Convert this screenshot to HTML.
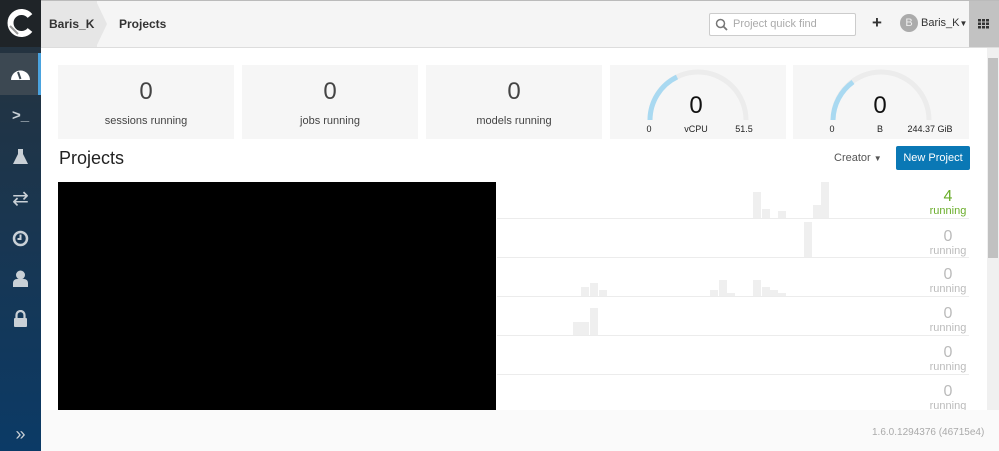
<!DOCTYPE html><html><head><style>
*{margin:0;padding:0;box-sizing:border-box}
body{width:999px;height:451px;overflow:hidden;font-family:"Liberation Sans",sans-serif;background:#fff;position:relative}
.a{position:absolute}
.side{left:0;top:0;width:41px;height:451px;background:linear-gradient(#27323b,#0b3a66)}
.card{background:#f6f6f6;top:65px;height:74px;text-align:center;color:#444}
.card .n{font-size:24px;font-weight:300;margin-top:13px;color:#444}
.card .l{font-size:11px;margin-top:9px;color:#444}
.bar{background:#efefef;width:8px}
.sep{left:497px;width:472px;height:1px;background:#ececec}
.run{left:913px;width:70px;text-align:center;color:#bbb}
.run b{display:block;font-weight:normal;font-size:16px;line-height:16px}
.run i{display:block;font-style:normal;font-size:11px;line-height:12px}
.ic{left:0;width:41px;text-align:center;color:#c9d0d6}
</style></head><body>
<div class="a side"></div>
<div class="a" style="left:0;top:0;width:41px;height:47px;background:#1f2428"></div>
<svg class="a" style="left:6px;top:8px" width="28" height="30" viewBox="0 0 28 30"><path d="M24 8 A11 11 0 1 0 24 22" fill="none" stroke="#fff" stroke-width="6"/><path d="M4 18 L12 26" stroke="#999" stroke-width="2"/></svg>
<div class="a" style="left:0;top:53px;width:41px;height:42px;background:#3c4852"></div>
<div class="a" style="left:38px;top:53px;width:3px;height:42px;background:#4aa3df"></div>
<svg class="a" style="left:10px;top:66px" width="21" height="15" viewBox="0 0 21 15"><path d="M1 14 A9.5 9.5 0 1 1 20 14 Z" fill="#fff"/><path d="M10.5 13 L8 6" stroke="#3c4852" stroke-width="2"/></svg>
<div class="a ic" style="top:107px;font-size:15px;font-weight:bold">&gt;_</div>
<svg class="a" style="left:13px;top:148px" width="15" height="17"><path d="M5 1h5v5l5 10H0L5 6z" fill="#c9d0d6"/></svg>
<div class="a ic" style="top:186px;font-size:20px">⇄</div>
<svg class="a" style="left:12px;top:230px" width="17" height="17"><circle cx="8.5" cy="8.5" r="6.5" fill="none" stroke="#c9d0d6" stroke-width="2.5"/><path d="M8.5 4.5v4.5h-3" stroke="#c9d0d6" stroke-width="2" fill="none"/></svg>
<svg class="a" style="left:13px;top:270px" width="15" height="17"><circle cx="7.5" cy="5" r="4.5" fill="#c9d0d6"/><path d="M0 17v-4a4 4 0 0 1 4-4h7a4 4 0 0 1 4 4v4z" fill="#c9d0d6"/></svg>
<svg class="a" style="left:13px;top:310px" width="15" height="17"><path d="M3.5 8V5a4 4 0 0 1 8 0v3" fill="none" stroke="#c9d0d6" stroke-width="2.2"/><rect x="1" y="8" width="13" height="9" rx="1" fill="#c9d0d6"/></svg>
<div class="a ic" style="top:424px;font-size:18px">»</div>
<div class="a" style="left:41px;top:0;width:958px;height:48px;background:#f5f5f5;border-top:1px solid #bbb;border-bottom:1px solid #ddd"></div>
<div class="a" style="left:41px;top:1px;width:56px;height:46px;background:#e6e6e6"></div>
<svg class="a" style="left:96px;top:1px" width="12" height="46"><path d="M0 0L11 23L0 46Z" fill="#e6e6e6"/></svg>
<div class="a" style="left:49px;top:17px;font-size:12px;font-weight:bold;color:#333">Baris_K</div>
<div class="a" style="left:119px;top:17px;font-size:12px;font-weight:bold;color:#333">Projects</div>
<div class="a" style="left:709px;top:13px;width:147px;height:23px;background:#fff;border:1px solid #ccc;border-radius:2px"></div>
<svg class="a" style="left:715px;top:18px" width="13" height="13"><circle cx="5.5" cy="5.5" r="4" fill="none" stroke="#777" stroke-width="1.5"/><path d="M8.5 8.5L12 12" stroke="#777" stroke-width="1.8"/></svg>
<div class="a" style="left:733px;top:18px;font-size:11px;color:#aaa">Project quick find</div>
<div class="a" style="left:872px;top:13px;font-size:17px;font-weight:bold;color:#333">+</div>
<div class="a" style="left:900px;top:14px;width:18px;height:18px;border-radius:50%;background:#ababab;color:#eee;font-size:11px;text-align:center;line-height:18px">B</div>
<div class="a" style="left:921px;top:17px;font-size:11px;color:#333">Baris_K<span style="font-size:8px">▼</span></div>
<div class="a" style="left:969px;top:1px;width:30px;height:46px;background:#c2c2c2"></div>
<svg class="a" style="left:978px;top:19px" width="11" height="10"><g fill="#333"><rect x="0" y="0" width="3" height="2.5"/><rect x="4" y="0" width="3" height="2.5"/><rect x="8" y="0" width="3" height="2.5"/><rect x="0" y="3.5" width="3" height="2.5"/><rect x="4" y="3.5" width="3" height="2.5"/><rect x="8" y="3.5" width="3" height="2.5"/><rect x="0" y="7" width="3" height="2.5"/><rect x="4" y="7" width="3" height="2.5"/><rect x="8" y="7" width="3" height="2.5"/></g></svg>
<div class="a" style="left:987px;top:48px;width:12px;height:362px;background:#f0f0f0"></div>
<div class="a" style="left:988px;top:58px;width:10px;height:200px;background:#c1c1c1"></div>
<div class="a card" style="left:58px;width:176px"><div class="n">0</div><div class="l">sessions running</div></div>
<div class="a card" style="left:242px;width:176px"><div class="n">0</div><div class="l">jobs running</div></div>
<div class="a card" style="left:426px;width:176px"><div class="n">0</div><div class="l">models running</div></div>
<div class="a card" style="left:610px;width:176px"></div>
<div class="a card" style="left:793px;width:176px"></div>
<svg class="a" style="left:610px;top:65px" width="176" height="74"><path d="M40 55A48 48 0 0 1 136 55" fill="none" stroke="#ececec" stroke-width="5"/><path d="M40 55A48 48 0 0 1 67 12" fill="none" stroke="#a9d9f1" stroke-width="5"/><text x="86" y="48" font-size="24" text-anchor="middle" fill="#111" font-family="Liberation Sans">0</text><text x="39" y="67" font-size="9" text-anchor="middle" fill="#222" font-family="Liberation Sans">0</text><text x="86" y="67" font-size="9" text-anchor="middle" fill="#222" font-family="Liberation Sans">vCPU</text><text x="134" y="67" font-size="9" text-anchor="middle" fill="#222" font-family="Liberation Sans">51.5</text></svg>
<svg class="a" style="left:793px;top:65px" width="176" height="74"><path d="M40 55A48 48 0 0 1 136 55" fill="none" stroke="#ececec" stroke-width="5"/><path d="M40 55A48 48 0 0 1 60 17" fill="none" stroke="#a9d9f1" stroke-width="5"/><text x="87" y="48" font-size="24" text-anchor="middle" fill="#111" font-family="Liberation Sans">0</text><text x="39" y="67" font-size="9" text-anchor="middle" fill="#222" font-family="Liberation Sans">0</text><text x="87" y="67" font-size="9" text-anchor="middle" fill="#222" font-family="Liberation Sans">B</text><text x="137" y="67" font-size="9" text-anchor="middle" fill="#222" font-family="Liberation Sans">244.37 GiB</text></svg>
<div class="a" style="left:59px;top:148px;font-size:18px;color:#222">Projects</div>
<div class="a" style="left:834px;top:152px;font-size:11px;color:#555">Creator <span style="font-size:8px">▼</span></div>
<div class="a" style="left:896px;top:146px;width:74px;height:24px;background:#0a78b5;border-radius:2px;color:#fff;font-size:11px;text-align:center;line-height:24px">New Project</div>
<div class="a sep" style="top:218px"></div><div class="a sep" style="top:257px"></div><div class="a sep" style="top:296px"></div><div class="a sep" style="top:335px"></div><div class="a sep" style="top:374px"></div>
<div class="a bar" style="left:753px;top:192px;height:26px"></div><div class="a bar" style="left:762px;top:209px;height:9px"></div><div class="a bar" style="left:778px;top:211px;height:7px"></div><div class="a bar" style="left:813px;top:205px;height:13px"></div><div class="a bar" style="left:821px;top:182px;height:36px"></div>
<div class="a bar" style="left:804px;top:222px;height:35px"></div>
<div class="a bar" style="left:581px;top:287px;height:9px"></div><div class="a bar" style="left:590px;top:283px;height:13px"></div><div class="a bar" style="left:599px;top:290px;height:6px"></div><div class="a bar" style="left:710px;top:290px;height:6px"></div><div class="a bar" style="left:719px;top:280px;height:16px"></div><div class="a bar" style="left:727px;top:293px;height:3px"></div><div class="a bar" style="left:753px;top:280px;height:16px"></div><div class="a bar" style="left:762px;top:287px;height:9px"></div><div class="a bar" style="left:770px;top:290px;height:6px"></div><div class="a bar" style="left:778px;top:293px;height:3px"></div>
<div class="a bar" style="left:573px;top:322px;height:13px"></div><div class="a bar" style="left:581px;top:322px;height:13px"></div><div class="a bar" style="left:590px;top:308px;height:27px"></div>
<div class="a run" style="top:189px;color:#6aad2a"><b>4</b><i>running</i></div>
<div class="a run" style="top:229px"><b>0</b><i>running</i></div>
<div class="a run" style="top:267px"><b>0</b><i>running</i></div>
<div class="a run" style="top:306px"><b>0</b><i>running</i></div>
<div class="a run" style="top:345px"><b>0</b><i>running</i></div>
<div class="a run" style="top:384px"><b>0</b><i>running</i></div>
<div class="a" style="left:41px;top:410px;width:958px;height:41px;background:#fafafa"></div>
<div class="a" style="left:58px;top:182px;width:438px;height:228px;background:#000"></div>
<div class="a" style="left:872px;top:427px;font-size:10px;color:#aaa">1.6.0.1294376 (46715e4)</div>
</body></html>
